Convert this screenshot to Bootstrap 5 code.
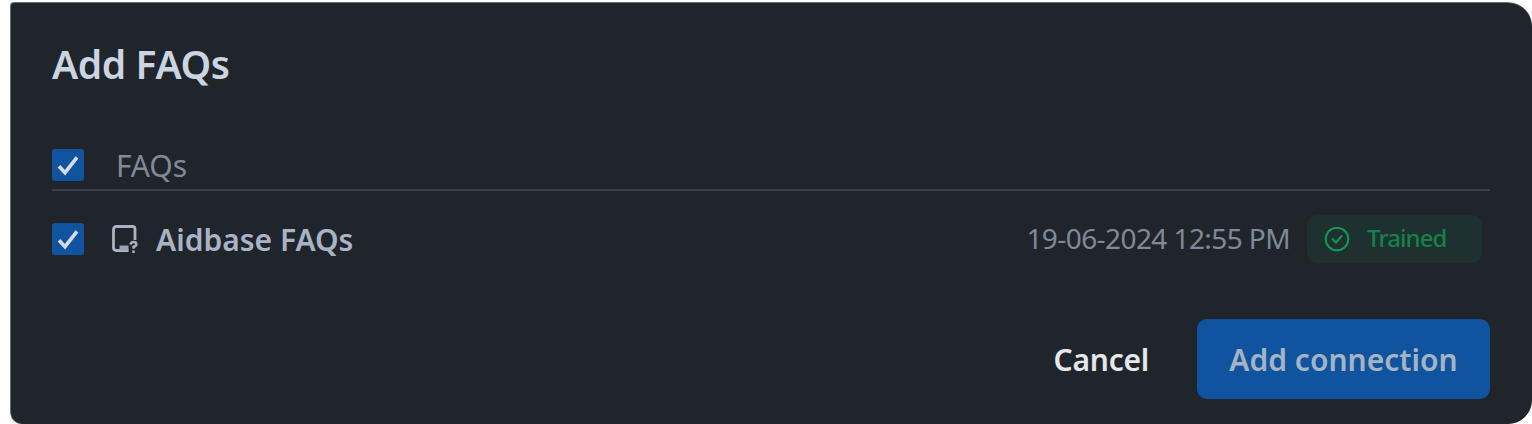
<!DOCTYPE html>
<html lang="en">
<head>
<meta charset="utf-8">
<meta name="viewport" content="width=device-width, initial-scale=1">
<title>Add FAQs</title>
<link href="https://cdn.jsdelivr.net/npm/bootstrap@5.3.0/dist/css/bootstrap.min.css" rel="stylesheet">
<style>
body{background:#fff;font-family:"Noto Sans","Open Sans",sans-serif;height:424px;overflow:hidden;padding:3px 0 0 11px}
.panel{height:421px;background:#20252c;border-radius:3px 24px 24px 12px;padding:38px 42px 0 41px;box-shadow:0 0 0 1px #6b6f75;clip-path:inset(-1px 0 0 -1px round 3px 24px 24px 12px);white-space:nowrap}
.title{font-size:39px;line-height:46px;font-weight:600;color:#cbd5e1;letter-spacing:-.4px;margin:0}
.head-row{height:49px;margin-top:55px;border-bottom:2px solid #3b414b;padding-top:7px}
.item-row{height:48px;margin-top:24px;padding-right:8px}
.form-check-input.tick{width:32px;height:32px;margin:0;border:0;border-radius:3px!important;background-color:#10549f;background-size:32px 32px;background-image:url("data:image/svg+xml,%3Csvg xmlns='http://www.w3.org/2000/svg' viewBox='0 0 32 32'%3E%3Cpath d='M7 17.3L13 23.7L25 8.3' fill='none' stroke='%23d6dbe0' stroke-width='3.6'/%3E%3C/svg%3E")!important}
.col-name{font-size:30px;line-height:34px;color:#7f8a99;margin-left:32px;letter-spacing:-.1px}
.item-name{font-size:30px;line-height:34px;font-weight:600;color:#a8b4c4;margin-left:17px;padding-top:2px}
.date{font-size:28px;line-height:34px;color:#7f8a99;letter-spacing:-.58px;padding-bottom:2px}
.status{width:175px;height:48px;border-radius:10px;background:#1e302f;color:#14824a;font-size:24px;font-weight:500;letter-spacing:-.9px;padding-left:17px;margin-left:17px}
.status-text{padding-bottom:2px}
.actions{height:80px;margin-top:56px}
.actions .btn{font-size:30px;font-weight:600;line-height:34px;padding:2px 0 0;border:0;--bs-btn-border-radius:10px}
.btn-cancel{color:#e5e7eb;margin-right:48px}
.actions .btn-cancel{letter-spacing:-.25px}
.btn-add,.btn-add:hover{width:293px;height:80px;background:#10549f;color:#a5b4c5}
</style>
</head>
<body>
<main class="panel">
  <h1 class="title"><span>Add FAQs</span></h1>
  <div class="head-row d-flex align-items-start">
    <input class="form-check-input tick" type="checkbox" checked aria-label="Select all">
    <span class="col-name">FAQs</span>
  </div>
  <div class="item-row d-flex align-items-center">
    <input class="form-check-input tick" type="checkbox" checked aria-label="Select Aidbase FAQs">
    <svg width="28" height="32" viewBox="0 0 28 32" style="margin-left:27px" fill="none" stroke="#a8b4c4" aria-hidden="true">
      <path d="M24 17V6Q24 3.500 21.500 3.500H5.500Q2.500 3.500 2.500 6.500V24.500Q2.500 27.500 5.500 27.500H17.500" stroke-width="2.800"/>
      <path d="M8.500 25H17.500" stroke-width="5" stroke="#97a3b2"/>
      <path d="M19.500 21.500Q20 19 22.600 19Q25.300 19 25.300 21.200Q25.300 23 22.500 23.800V25.800M22.500 27.400V30" stroke-width="2.500"/>
    </svg>
    <span class="item-name">Aidbase FAQs</span>
    <span class="date ms-auto">19-06-2024 12:55 PM</span>
    <span class="status d-flex align-items-center">
      <svg width="26" height="26" viewBox="0 0 26 26" fill="none" stroke="#129a55" stroke-width="2" aria-hidden="true"><circle cx="13" cy="13" r="11.300"/><path d="M8 12.500L12 16.500L18 9.500"/></svg>
      <span class="status-text" style="margin-left:17px">Trained</span>
    </span>
  </div>
  <div class="actions d-flex align-items-center justify-content-end">
    <button type="button" class="btn btn-cancel">Cancel</button>
    <button type="button" class="btn btn-add">Add connection</button>
  </div>
</main>
<script src="https://cdn.jsdelivr.net/npm/bootstrap@5.3.0/dist/js/bootstrap.bundle.min.js"></script>
</body>
</html>
